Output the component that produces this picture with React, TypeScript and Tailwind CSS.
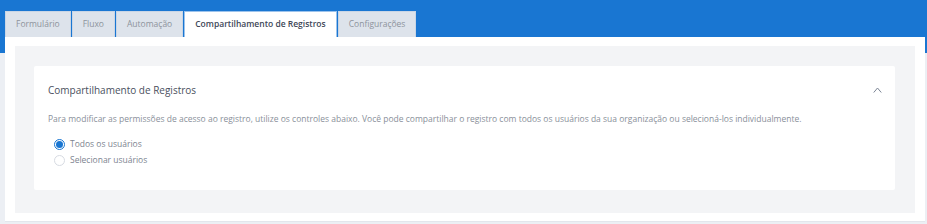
import React from 'react';

const tabs = ['Formulário', 'Fluxo', 'Automação', 'Compartilhamento de Registros', 'Configurações'];
const active = 'Compartilhamento de Registros';

function ChevronUp() {
  return (
    <svg width="9" height="6" viewBox="0 0 9 6" fill="none">
      <path d="M1 5.2 L4.5 1 L8 5.2" stroke="#7b8494" strokeWidth="1" strokeLinecap="round" strokeLinejoin="round" />
    </svg>
  );
}

function Radio({ checked, label }: { checked?: boolean; label: string }) {
  return (
    <label className="flex items-center gap-[5px] h-[16px]">
      <span
        className={`w-[11px] h-[11px] rounded-full border flex items-center justify-center ${
          checked ? 'border-[#1976d2]' : 'border-[#d7dbe2]'
        }`}
      >
        {checked && <span className="w-[7px] h-[7px] rounded-full bg-[#1976d2]" />}
      </span>
      <span className="text-[8.5px] text-[#7d8490]">{label}</span>
    </label>
  );
}

export default function App() {
  return (
    <div className="w-full h-[224px] bg-[#eceff4] overflow-hidden" style={{ fontFamily: '"Open Sans", sans-serif' }}>
      <div className="h-[53px] bg-[#1976d2] px-[5px] pt-[11px] flex gap-[1px]">
        {tabs.map((t) => {
          const isActive = t === active;
          return (
            <div
              key={t}
              className={`h-[26px] px-[10px] flex items-center text-[8.5px] border-t border-x ${
                isActive
                  ? 'bg-white text-[#404757] font-semibold border-[#9cc3ec]'
                  : 'bg-[#dde3eb] text-[#8d939c] border-[#c9d6e6]'
              }`}
            >
              {t}
            </div>
          );
        })}
      </div>

      <div className="ml-[5px] mr-[2px] -mt-[16px] h-[185px] bg-white border-b border-[#e3e6ec] pt-[9px] px-[10px] pb-[8px]">
        <div className="h-full bg-[#f3f4f6] pt-[20px] pl-[19px] pr-[20px]">
          <div className="h-[124px] bg-white rounded-[2px] pl-[14px] pr-[13px] pt-[15px]">
            <div className="flex items-center justify-between h-[18px]">
              <h2 className="text-[10px] text-[#4a5060]">Compartilhamento de Registros</h2>
              <ChevronUp />
            </div>
            <p className="mt-[14px] text-[8.5px] leading-[12px] text-[#8a909a]">
              Para modificar as permissões de acesso ao registro, utilize os controles abaixo. Você pode compartilhar o registro com todos os usuários da sua organização ou selecioná-los individualmente.
            </p>
            <div className="mt-[11px] pl-[6px] flex flex-col">
              <Radio checked label="Todos os usuários" />
              <Radio label="Selecionar usuários" />
            </div>
          </div>
        </div>
      </div>
    </div>
  );
}
